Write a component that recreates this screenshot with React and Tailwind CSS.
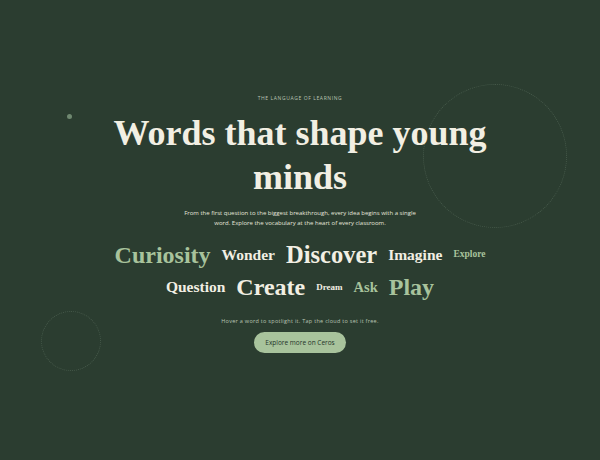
import React from "react";

const serif = { fontFamily: '"Liberation Serif", "DejaVu Serif", serif' };
const sans = { fontFamily: '"Open Sans", "Noto Sans", sans-serif' };

const row1 = [
  { t: "Curiosity", c: "text-[24px] text-[#a8c39c]" },
  { t: "Wonder", c: "text-[15.5px] text-[#f2efe3]" },
  { t: "Discover", c: "text-[24.5px] text-[#f2efe3]" },
  { t: "Imagine", c: "text-[15.5px] text-[#f2efe3]" },
  { t: "Explore", c: "text-[9.5px] text-[#a8c39c]" },
];
const row2 = [
  { t: "Question", c: "text-[15.5px] text-[#f2efe3]" },
  { t: "Create", c: "text-[24px] text-[#f2efe3]" },
  { t: "Dream", c: "text-[9px] text-[#f2efe3]" },
  { t: "Ask", c: "text-[14.5px] text-[#a8c39c]" },
  { t: "Play", c: "text-[24px] text-[#a8c39c]" },
];

export default function App() {
  return (
    <div className="relative h-[460px] w-[600px] overflow-hidden bg-[#2b3d30]">
      <div className="absolute left-[423px] top-[84px] h-[144px] w-[144px] rounded-full border border-dotted border-[#46594a]" />
      <div className="absolute left-[41px] top-[311px] h-[60px] w-[60px] rounded-full border border-dotted border-[#46594a]" />
      <div className="absolute left-[67px] top-[114px] h-[5px] w-[5px] rounded-full bg-[#6f8870]" />

      <div className="relative flex flex-col items-center pt-[95px]">
        <div className="text-[5px] tracking-[0.12em] text-[#b9c4b3]" style={sans}>
          THE LANGUAGE OF LEARNING
        </div>
        <h1 className="mt-[8px] text-center text-[36px] font-bold leading-[44px] text-[#f2efe3]" style={serif}>
          Words that shape young
          <br />
          minds
        </h1>
        <p className="mt-[9px] w-[240px] text-center text-[6px] leading-[10px] text-[#e4e6dc]" style={sans}>
          From the first question to the biggest breakthrough, every idea begins with a single word. Explore the vocabulary at the heart of every classroom.
        </p>
        <div className="mt-[15px] flex items-center justify-center gap-[11px]" style={serif}>
          {row1.map((w) => (
            <span key={w.t} className={"font-bold leading-none " + w.c}>{w.t}</span>
          ))}
        </div>
        <div className="mt-[8px] flex items-center justify-center gap-[11px]" style={serif}>
          {row2.map((w) => (
            <span key={w.t} className={"font-bold leading-none " + w.c}>{w.t}</span>
          ))}
        </div>
        <div className="mt-[18px] text-[5.5px] tracking-[0.05em] text-[#b9c4b3]" style={sans}>
          Hover a word to spotlight it. Tap the cloud to set it free.
        </div>
        <button className="mt-[7px] h-[21px] w-[92px] rounded-full bg-[#a8c39c] text-[6.5px] text-[#233328]" style={sans}>
          Explore more on Ceros
        </button>
      </div>
    </div>
  );
}
